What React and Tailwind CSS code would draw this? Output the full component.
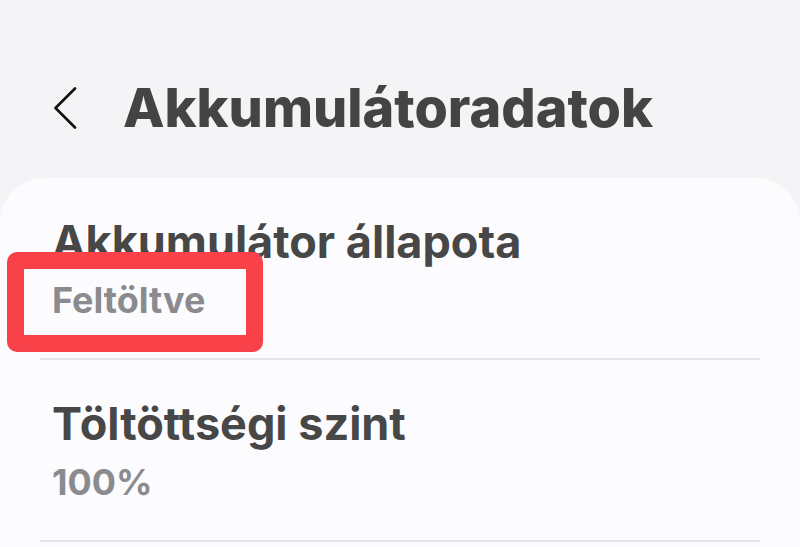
const rows = [
  { title: 'Akkumulátor állapota', value: 'Feltöltve' },
  { title: 'Töltöttségi szint', value: '100%' },
];

function InfoRow({ title, value }) {
  return (
    <div>
      <div className="pl-[52px] pt-[41px] pb-[40px]">
        <p className="text-[45px] leading-[45px] font-bold text-[#474747]">{title}</p>
        <p className="mt-[18px] text-[36px] leading-[36px] font-bold text-[#8b8b8f]">{value}</p>
      </div>
      <div className="mx-[40px] h-[2px] bg-[#e4e4e6]" />
    </div>
  );
}

export default function App() {
  return (
    <div className="relative w-[800px] h-[547px] overflow-hidden bg-[#f4f4f6] font-['Inter',sans-serif]">
      {/* Header */}
      <div className="flex items-center pt-[80px] h-[136px]">
        <div className="w-[123px] flex items-center">
          <svg width="24" height="42" viewBox="0 0 24 42" className="ml-[53px]" fill="none">
            <path d="M22 1.5 L2.5 21 L22 40.5" stroke="#111" strokeWidth="2.6" strokeLinecap="round" strokeLinejoin="round" />
          </svg>
        </div>
        <h1 className="text-[54px] leading-[56px] font-extrabold text-[#444444]">Akkumulátoradatok</h1>
      </div>

      {/* Card */}
      <div className="mt-[42px] bg-[#fcfcfe] rounded-t-[44px] h-[500px]">
        {rows.map((row) => (
          <InfoRow key={row.title} {...row} />
        ))}
      </div>

      {/* Highlight annotation */}
      <div className="absolute left-[7px] top-[252px] w-[256px] h-[100px] border-[17px] border-[#f9414a] rounded-[10px]" />
    </div>
  );
}
